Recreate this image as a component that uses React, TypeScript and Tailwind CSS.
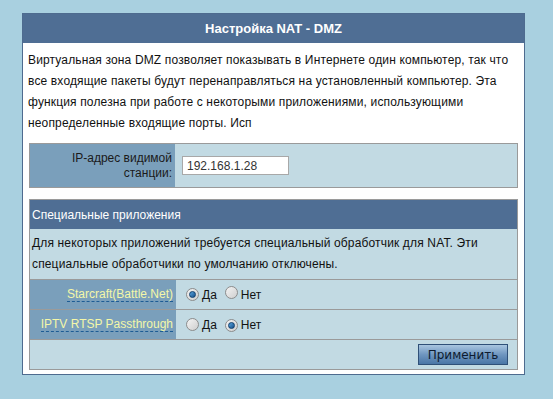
import type { ReactNode } from "react";

function Radio({ checked }: { checked: boolean }) {
	return (
		<span className="relative inline-flex h-[13px] w-[13px] items-center justify-center rounded-full border border-[#8c8c8c] bg-gradient-to-br from-[#f4f4f4] to-[#cfcfcf]">
			{checked && (
				<span className="h-[7px] w-[7px] rounded-full border border-[#0f3f6e] bg-gradient-to-br from-[#5aa6e0] to-[#16508a]" />
			)}
		</span>
	);
}

function Choice({ yes }: { yes: boolean }) {
	return (
		<div className="flex items-center pl-[10px] text-[12px] text-[#111]">
			<Radio checked={yes} />
			<span className="ml-[3px]">Да</span>
			<span className="ml-[8px]">
				<Radio checked={!yes} />
			</span>
			<span className="ml-[3px]">Нет</span>
		</div>
	);
}

function AppRow({ label, children }: { label: string; children: ReactNode }) {
	return (
		<div className="flex h-[30px] border-t border-[#9a9a9a]">
			<div className="flex w-[146px] items-center justify-end bg-[#7a9fbb] pr-[3px]">
				<span className="border-b border-dashed border-[#1d5c94] leading-[14px] text-[#f4f7a8]">
					{label}
				</span>
			</div>
			<div className="flex flex-1 items-center">{children}</div>
		</div>
	);
}

export default function App() {
	return (
		<div className="h-[399px] w-[553px] bg-[#a9d0e0] pl-[22px] pt-[13px] font-['Liberation_Sans',Arial,sans-serif] text-[12px]">
			<div className="w-[503px] border border-[#4e6b8f] bg-white pb-[4px]">
				{/* Title */}
				<div className="flex h-[29px] items-center justify-center bg-[#4f6e94] text-[13px] font-bold text-white">
					Настройка NAT - DMZ
				</div>

				{/* Description */}
				<p className="px-[5px] pt-[7px] leading-[21px] tracking-[0.15px] text-[#111]">
					Виртуальная зона DMZ позволяет показывать в Интернете один компьютер, так что
					<br />
					все входящие пакеты будут перенаправляться на установленный компьютер. Эта
					<br />
					функция полезна при работе с некоторыми приложениями, использующими
					<br />
					неопределенные входящие порты. Исп
				</p>

				{/* DMZ host */}
				<div className="mx-[6px] mt-[9px] flex h-[45px] border border-[#9a9a9a]">
					<div className="flex w-[145px] items-center justify-end bg-[#7a9fbb] pr-[3px] text-right leading-[15px] text-[#1a1a1a]">
						IP-адрес видимой
						<br />
						станции:
					</div>
					<div className="flex flex-1 items-center bg-[#c2dae3] pl-[7px]">
						<div className="flex h-[19px] w-[107px] items-center border border-[#a8a8a8] bg-white px-[4px] text-[#333]">
							192.168.1.28
						</div>
					</div>
				</div>

				{/* Special applications */}
				<div className="mx-[6px] mt-[11px] border border-[#9a9a9a] bg-[#c2dae3]">
					<div className="flex h-[29px] items-center bg-[#4f6e94] px-[2px] text-white">
						Специальные приложения
					</div>
					<p className="px-[2px] py-[4px] leading-[21px] tracking-[0.15px] text-[#111]">
						Для некоторых приложений требуется специальный обработчик для NAT. Эти
						<br />
						специальные обработчики по умолчанию отключены.
					</p>
					<AppRow label="Starcraft(Battle.Net)">
						<Choice yes={true} />
					</AppRow>
					<AppRow label="IPTV RTSP Passthrough">
						<Choice yes={false} />
					</AppRow>
					<div className="flex h-[30px] items-center justify-end border-t border-[#9a9a9a] pr-[9px]">
						<button className="h-[21px] w-[90px] border border-[#2f5078] bg-gradient-to-b from-[#a9c6e0] via-[#6f96c0] to-[#4a76a6] font-['DejaVu_Sans',Verdana,sans-serif] text-[12px] text-[#0d1b30]">
							Применить
						</button>
					</div>
				</div>
			</div>
		</div>
	);
}
